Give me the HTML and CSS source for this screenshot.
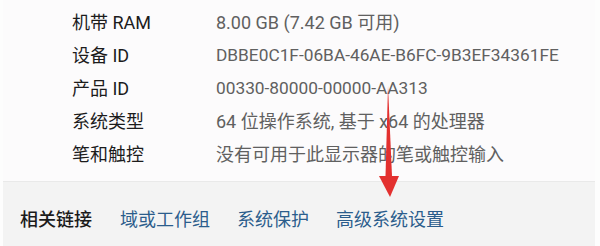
FILE: index.html
```html
<!DOCTYPE html>
<html lang="zh-CN">
<head>
<meta charset="utf-8">
<link rel="stylesheet" href="styles.css">
</head>
<body>
<div class="page">
  <div class="specs">
    <div class="row"><span class="label">机带 RAM</span><span class="value">8.00 GB (7.42 GB 可用)</span></div>
    <div class="row"><span class="label">设备 ID</span><span class="value code">DBBE0C1F-06BA-46AE-B6FC-9B3EF34361FE</span></div>
    <div class="row"><span class="label">产品 ID</span><span class="value code">00330-80000-00000-AA313</span></div>
    <div class="row"><span class="label">系统类型</span><span class="value">64 位操作系统, 基于 x64 的处理器</span></div>
    <div class="row"><span class="label">笔和触控</span><span class="value">没有可用于此显示器的笔或触控输入</span></div>
  </div>
  <div class="links">
    <span class="links-title">相关链接</span>
    <a class="link">域或工作组</a>
    <a class="link">系统保护</a>
    <a class="link">高级系统设置</a>
  </div>
  <svg class="arrow" width="30" height="120" viewBox="0 0 30 120">
    <polygon points="15.5,94 18,4 22,94" fill="#e3302f"/>
    <polygon points="9,94 29,94 20,115" fill="#e3302f"/>
  </svg>
</div>
</body>
</html>
```
FILE: styles.css
```css
html, body {
  margin: 0;
  padding: 0;
  background: #fdfdfd;
}
body {
  font-family: Roboto, "Noto Sans CJK SC", sans-serif;
  font-size: 18px;
}
.page {
  position: relative;
  width: 600px;
  height: 246px;
  overflow: hidden;
}
.specs {
  margin: 0 5px 0 3px;
  padding-top: 6px;
  height: 175px;
  background: #fcfbfc;
  border-bottom: 1px solid #e9e9e9;
}
.row {
  display: flex;
  height: 33px;
  line-height: 33px;
  padding-left: 69px;
}
.label {
  width: 144px;
  color: #1c1c1c;
}
.value {
  color: #606060;
}
.code {
  font-size: 17.3px;
}
.links {
  margin: 0 5px 0 3px;
  height: 64px;
  background: #f3f3f3;
  display: flex;
  gap: 26px;
  padding-left: 17px;
  padding-top: 24px;
  box-sizing: border-box;
  line-height: 28px;
}
.links-title {
  color: #1b1b1b;
  font-weight: 500;
  margin-right: 2px;
}
.link {
  color: #2b5d8c;
}
.link + .link {
  margin-left: 1px;
}
.arrow {
  position: absolute;
  left: 370px;
  top: 82px;
}
```
